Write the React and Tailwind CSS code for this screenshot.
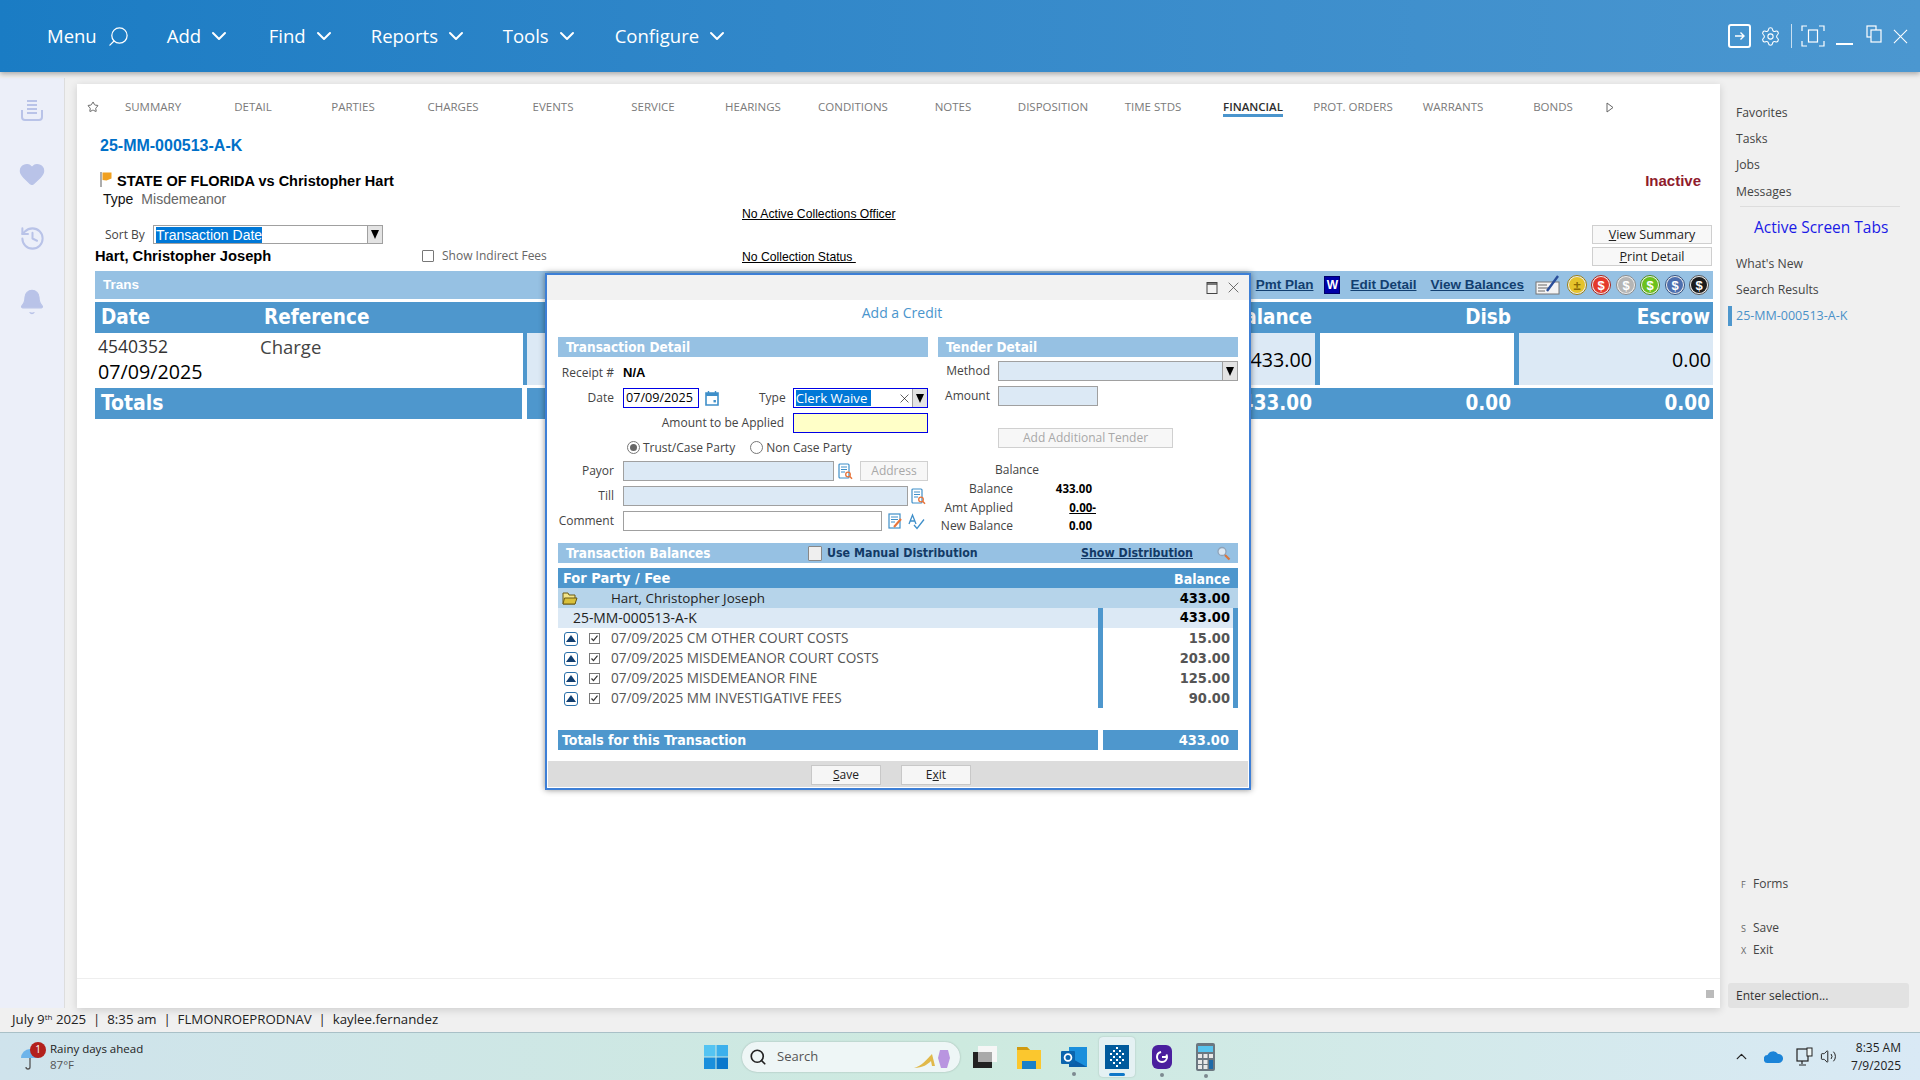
import React from 'react';
import { Search, ChevronDown, Settings, Star, Heart, History, Bell, ChevronUp, Volume2 } from 'lucide-react';

const arial = "font-['Liberation_Sans',Arial,sans-serif]";
const tahoma = "font-['DejaVu_Sans_Condensed','DejaVu_Sans',sans-serif]";

const navItems = [
  { label: 'Add', width: 'w-[102px]' },
  { label: 'Find', width: 'w-[102px]' },
  { label: 'Reports', width: 'w-[132px]' },
  { label: 'Tools', width: 'w-[112px]' },
  { label: 'Configure', width: 'w-[120px]' },
];

const tabs = ['SUMMARY', 'DETAIL', 'PARTIES', 'CHARGES', 'EVENTS', 'SERVICE', 'HEARINGS', 'CONDITIONS', 'NOTES', 'DISPOSITION', 'TIME STDS', 'FINANCIAL', 'PROT. ORDERS', 'WARRANTS', 'BONDS'];

const fees = [
  { name: '07/09/2025 CM OTHER COURT COSTS', amount: '15.00' },
  { name: '07/09/2025 MISDEMEANOR COURT COSTS', amount: '203.00' },
  { name: '07/09/2025 MISDEMEANOR FINE', amount: '125.00' },
  { name: '07/09/2025 MM INVESTIGATIVE FEES', amount: '90.00' },
];

const coins = [
  { fill: '#e5c32c', ring: '#9a7d10', text: '#8a6a05', sign: '±' },
  { fill: '#e5392b', ring: '#a8241a', text: '#fff', sign: '$' },
  { fill: '#b5b5b5', ring: '#8b8b8b', text: '#fff', sign: '$' },
  { fill: '#6cc11c', ring: '#4b8d10', text: '#fff', sign: '$' },
  { fill: '#4d6fae', ring: '#33507f', text: '#fff', sign: '$' },
  { fill: '#1d1d1d', ring: '#555555', text: '#fff', sign: '$' },
];

// white squares of the case-management app icon
const appDots = [[11, 2], [14, 5], [8, 5], [11, 8], [5, 8], [17, 8], [14, 11], [8, 11], [11, 14], [17, 14], [5, 14], [14, 17], [8, 17], [11, 20]];

const Coin = ({ fill, ring, text, sign }) => (
  <svg width="20" height="20" viewBox="0 0 20 20" className="shrink-0">
    <circle cx="10" cy="10" r="9.5" fill="#eeeeee" stroke={ring} strokeWidth="1" />
    <circle cx="10" cy="10" r="8" fill={fill} />
    <text x="10" y="14.5" textAnchor="middle" fontSize="13" fontWeight="700" fontFamily="Liberation Sans" fill={text}>{sign}</text>
  </svg>
);

const CloseIcon = ({ size, stroke = '#fff' }) => (
  <svg width={size} height={size} viewBox="0 0 16 16" className="shrink-0">
    <path d="M1 1l14 14M15 1L1 15" fill="none" stroke={stroke} strokeWidth="1.1" />
  </svg>
);

const LookupIcon = () => (
  <svg width="15" height="17" viewBox="0 0 15 17" className="shrink-0">
    <rect x="1" y="1" width="10" height="14" rx="1" fill="#fff" stroke="#3f8fc9" strokeWidth="1.2" />
    <path d="M3 4h6M3 6.5h6M3 9h4" stroke="#3f8fc9" strokeWidth="1" />
    <circle cx="10" cy="11.5" r="2.3" fill="none" stroke="#e8743a" strokeWidth="1.3" />
    <path d="M11.6 13.2l2.4 2.6" stroke="#e8743a" strokeWidth="1.5" />
  </svg>
);

const Arrow = () => (
  <span className="flex w-[15px] h-full items-center justify-center bg-[#e3e3e3] border-l border-[#a0a0a0]">
    <span className="w-0 h-0 border-x-[4px] border-x-transparent border-t-[9px] border-t-black" />
  </span>
);

const SectionHead = ({ children, className = '' }) => (
  <div className={`h-5 flex items-center pl-[8px] bg-[#96c1e3] text-white text-[13.5px] font-bold ${tahoma} ${className}`}>{children}</div>
);

const FormRow = ({ label, children, labelWidth = 'w-[56px]' }) => (
  <div className="flex items-center h-5">
    <span className={`${labelWidth} text-right text-[12px] text-[#444] shrink-0`}>{label}</span>
    <div className="ml-[9px] flex items-center h-5">{children}</div>
  </div>
);

const SmallBtn = ({ children, className = '' }) => (
  <button className={`h-5 bg-[#f6f6f6] border border-[#c8c8c8] text-[12px] text-[#222] ${className}`}>{children}</button>
);

const RailIcon = ({ children }) => <div className="h-[64px] flex items-center justify-center text-[#b9c3e8]">{children}</div>;

const RunningDot = ({ children, className = '' }) => (
  <div className={`relative shrink-0 flex items-center ${className}`}>
    {children}
    <span className="absolute left-1/2 -bottom-[7px] -ml-[2px] w-1 h-1 rounded-full bg-[#7d8a90]" />
  </div>
);

const Modal = () => (
  <div className="absolute left-[545px] top-[273px] w-[706px] h-[517px] border-2 border-[#3d7fd6] bg-white shadow-[0_0_6px_rgba(0,0,0,0.45)] flex flex-col">
    <div className="h-[25px] shrink-0 bg-[#f2f2f2] flex items-center justify-end pr-[10px] gap-[10px] text-[#444]">
      <svg width="12" height="13" viewBox="0 0 12 13"><rect x="1" y="1.5" width="10" height="11" fill="none" stroke="#444" strokeWidth="1" /><path d="M1 3h10" stroke="#444" strokeWidth="1.4" /></svg>
      <CloseIcon size={11} stroke="#444" />
    </div>
    <div className="h-6 shrink-0 flex items-center justify-center text-[14px] text-[#4a95cd] pl-[8px]">Add a Credit</div>

    <div className="mt-[13px] px-[11px] flex gap-[10px]">
      <div className="w-[370px]">
        <SectionHead>Transaction Detail</SectionHead>
        <div className="mt-[6px] flex flex-col gap-[5px]">
          <FormRow label="Receipt #"><span className={`text-[13px] font-bold text-black ${arial}`}>N/A</span></FormRow>
          <div className="flex items-center h-5">
            <FormRow label="Date">
              <div className="w-[76px] h-5 border border-[#0000e6] px-[2px] flex items-center text-[12.6px] text-black">07/09/2025</div>
            </FormRow>
            <svg width="14" height="16" viewBox="0 0 14 16" className="ml-[6px]"><path d="M1 3h12v12H1z" fill="#fff" stroke="#3f8fc9" strokeWidth="1.6" /><path d="M1 3h12v3H1z" fill="#3f8fc9" /><path d="M3.5 1v3M10.5 1v3" stroke="#3f8fc9" strokeWidth="1.4" /><rect x="8.5" y="10" width="2.4" height="2.4" fill="#3f8fc9" /></svg>
            <span className="ml-[40px] text-[12px] text-[#444]">Type</span>
            <div className="ml-[7px] w-[135px] h-5 border border-[#0000e6] flex items-center justify-between text-[13.2px]">
              <span className="ml-[2px] bg-[#0078d7] text-white h-[16px] leading-[16px] w-[75px] whitespace-nowrap overflow-hidden">Clerk Waive</span>
              <div className="flex items-center h-full">
                <CloseIcon size={9} stroke="#000" />
                <span className="w-[3px]" />
                <Arrow />
              </div>
            </div>
          </div>
          <div className="flex items-center h-5 justify-end">
            <span className="text-[12px] text-[#444] mr-[9px]">Amount to be Applied</span>
            <div className="w-[135px] h-5 border border-[#0000e6] bg-[#ffffc8]" />
          </div>
          <div className="flex items-center h-[18px] pt-[1px] pl-[69px] text-[12px] text-[#444]">
            <span className="w-[13px] h-[13px] rounded-full border border-[#777] flex items-center justify-center"><span className="w-[7px] h-[7px] rounded-full bg-[#666]" /></span>
            <span className="ml-[3px]">Trust/Case Party</span>
            <span className="ml-[15px] w-[13px] h-[13px] rounded-full border border-[#777]" />
            <span className="ml-[3px]">Non Case Party</span>
          </div>
          <div className="flex items-center h-5">
            <FormRow label="Payor"><div className="w-[211px] h-5 bg-[#dce9f5] border border-[#a0a0a0]" /></FormRow>
            <span className="ml-[4px]"><LookupIcon /></span>
            <button className="ml-[7px] w-[69px] h-5 bg-[#f7f7f7] border border-[#d0d0d0] text-[12px] text-[#a8a8a8]">Address</button>
          </div>
          <div className="flex items-center h-5">
            <FormRow label="Till"><div className="w-[285px] h-5 bg-[#dce9f5] border border-[#a0a0a0]" /></FormRow>
            <span className="ml-[3px]"><LookupIcon /></span>
          </div>
          <div className="flex items-center h-5">
            <FormRow label="Comment"><div className="w-[259px] h-5 bg-white border border-[#a0a0a0]" /></FormRow>
            <svg width="15" height="16" viewBox="0 0 15 16" className="ml-[6px]"><rect x="1" y="1" width="11" height="14" fill="#fff" stroke="#3f8fc9" strokeWidth="1.2" /><path d="M3 4h7M3 6.5h7M3 9h4" stroke="#3f8fc9" strokeWidth="1" /><path d="M6 14l7-8" stroke="#e8743a" strokeWidth="2" /></svg>
            <svg width="17" height="17" viewBox="0 0 17 17" className="ml-[5px]"><path d="M1 11L4.5 2 8 11M2.5 8h4" fill="none" stroke="#3f8fc9" strokeWidth="1.3" /><path d="M6 12l3 3.5 7-9" fill="none" stroke="#3f8fc9" strokeWidth="1.3" /></svg>
          </div>
        </div>
      </div>

      <div className="w-[300px]">
        <SectionHead className="pl-[7px]">Tender Detail</SectionHead>
        <div className="mt-1 flex flex-col gap-[5px]">
          <div className="flex items-center h-5">
            <span className="w-[52px] text-right text-[12px] text-[#444]">Method</span>
            <div className="ml-[8px] w-[240px] h-5 bg-[#dce9f5] border border-[#a0a0a0] flex justify-end"><Arrow /></div>
          </div>
          <div className="flex items-center h-5">
            <span className="w-[52px] text-right text-[12px] text-[#444]">Amount</span>
            <div className="ml-[8px] w-[100px] h-5 bg-[#dce9f5] border border-[#a0a0a0]" />
          </div>
        </div>
        <button className="mt-[22px] ml-[60px] block w-[175px] h-5 bg-[#f7f7f7] border border-[#d0d0d0] text-[12px] text-[#a8a8a8]">Add Additional Tender</button>
        <div className="mt-[14px] ml-[57px] text-[12px] text-[#444] h-4 leading-4">Balance</div>
        <div className="mt-[2px] text-[12px] text-[#444]">
          <div className="flex h-[18px] items-center"><span className="w-[75px] text-right">Balance</span><span className="w-[79px] text-right font-bold text-black text-[11.5px]">433.00</span></div>
          <div className="flex h-[19px] items-center"><span className="w-[75px] text-right">Amt Applied</span><span className="w-[83px] text-right font-bold text-black text-[11.5px] underline">0.00-</span></div>
          <div className="flex h-[18px] items-center"><span className="w-[75px] text-right">New Balance</span><span className="w-[79px] text-right font-bold text-black text-[11.5px]">0.00</span></div>
        </div>
      </div>
    </div>

    <div className={`mx-[11px] mt-[8px] h-5 shrink-0 flex items-center pl-[8px] bg-[#96c1e3] text-[12.3px] font-bold ${tahoma}`}>
      <span className="w-[242px] text-white text-[13.5px]">Transaction Balances</span>
      <span className="w-[14px] h-[15px] bg-[#efefef] border border-[#888] rounded-[1px]" />
      <span className="ml-[5px] w-[254px] text-[#123a66]">Use Manual Distribution</span>
      <span className="w-[135px] text-[#123a66] underline">Show Distribution</span>
      <svg width="15" height="15" viewBox="0 0 15 15"><circle cx="6" cy="5.5" r="4" fill="#dbe8f4" stroke="#8fa3b8" strokeWidth="1.3" /><path d="M9 9l4.5 4.5" stroke="#d9763f" strokeWidth="2.2" /></svg>
    </div>

    <div className={`mx-[11px] mt-[5px] h-5 shrink-0 flex items-center justify-between pl-[5px] pr-[8px] pt-[2px] bg-[#4e97cd] text-white text-[14.5px] font-bold ${tahoma}`}>
      <span>For Party / Fee</span>
      <span className="text-[14px]">Balance</span>
    </div>
    <div className="mx-[11px] h-5 shrink-0 flex items-center pt-[1px] bg-[#b6d4ea] text-[13.4px] text-[#222]">
      <svg width="16" height="13" viewBox="0 0 16 13" className="ml-[4px]"><path d="M1 12V1h5l1 2h6v9z" fill="#f2e58a" stroke="#6b5b14" strokeWidth="1" /><path d="M1 12l1.5-6H15l-2 6z" fill="#d9c03a" stroke="#6b5b14" strokeWidth="1" /></svg>
      <span className="ml-[33px]">Hart, Christopher Joseph</span>
      <span className={`ml-auto mr-[8px] text-[14.5px] font-bold text-black ${tahoma}`}>433.00</span>
    </div>
    <div className="mx-[11px] h-5 shrink-0 flex pt-[1px] bg-[#dce9f5] text-[13.9px] text-[#222]">
      <div className="w-[540px] pl-[15px] flex items-center">25-MM-000513-A-K</div>
      <div className={`w-[140px] -mt-[1px] border-x-[5px] border-[#4e97cd] flex items-center justify-end pr-[3px] text-[14.5px] font-bold text-black ${tahoma}`}>433.00</div>
    </div>
    {fees.map((fee) => (
      <div key={fee.name} className="mx-[11px] h-5 shrink-0 flex text-[13.6px] text-[#555]">
        <div className="w-[540px] flex items-center pl-[6px] pt-[1px]">
          <span className="w-[14px] h-[14px] rounded-[3px] border border-[#2a6fa8] bg-white flex items-center justify-center">
            <span className="w-0 h-0 border-x-[5px] border-x-transparent border-b-[7px] border-b-[#123f70]" />
          </span>
          <span className="ml-[11px] w-[11px] h-[11px] border border-[#777] flex items-center justify-center">
            <svg width="9" height="9" viewBox="0 0 9 9"><path d="M1.5 4.5l2 2.2 4-5" fill="none" stroke="#333" strokeWidth="1.2" /></svg>
          </span>
          <span className="ml-[11px]">{fee.name}</span>
        </div>
        <div className={`w-[140px] border-x-[5px] border-[#4e97cd] flex items-center justify-end pr-[3px] pt-[2px] text-[14.5px] font-bold text-[#555] ${tahoma}`}>{fee.amount}</div>
      </div>
    ))}
    <div className={`mx-[11px] mt-[22px] h-5 shrink-0 flex gap-[5px] text-white text-[14px] font-bold ${tahoma}`}>
      <div className="w-[540px] bg-[#4e97cd] flex items-center pl-[4px] pt-[1px]">Totals for this Transaction</div>
      <div className="w-[135px] bg-[#4e97cd] flex items-center justify-end pr-[9px] pt-[1px] text-[14.5px]">433.00</div>
    </div>
    <div className="mt-auto h-[26px] shrink-0 bg-[#dcdcdc] flex items-center justify-center gap-[20px] pr-[14px] pt-[1px] mx-[1px] mb-[1px]">
      <SmallBtn className="w-[70px]"><span className="underline">S</span>ave</SmallBtn>
      <SmallBtn className="w-[70px]">E<span className="underline">x</span>it</SmallBtn>
    </div>
  </div>
);

const MainPanel = () => (
  <div className="relative ml-3 mt-3 w-[1643px] bg-white shadow-[0_2px_8px_rgba(0,0,0,0.15)] flex flex-col">
    <div className="h-[46px] shrink-0 flex items-center text-[11.5px] text-[#7a7a7a]">
      <div className="w-[26px] pl-[10px]"><Star size={12} className="text-[#666]" /></div>
      {tabs.map((tab) => (
        <div key={tab} className="w-[100px] h-full flex items-center justify-center">
          {tab === 'FINANCIAL' ? (
            <span className="relative font-semibold text-[#2e2e2e]">
              {tab}
              <span className="absolute left-0 right-0 -bottom-[1px] h-[3px] bg-[#4a95cd]" />
            </span>
          ) : tab}
        </div>
      ))}
      <svg width="8" height="11" viewBox="0 0 8 11" className="ml-[3px]"><path d="M1 1l6 4.5L1 10z" fill="none" stroke="#666" strokeWidth="1" /></svg>
    </div>
    <div className={`h-8 shrink-0 flex items-center pl-[23px] pb-[1px] text-[16px] font-bold text-[#0070c8] ${arial}`}>25-MM-000513-A-K</div>
    <div className={`mt-[11px] h-[18px] shrink-0 flex items-center pl-[23px] pr-[19px] ${arial}`}>
      <svg width="12" height="15" viewBox="0 0 12 15" className="-mt-[5px]"><path d="M1 0v15" stroke="#999" strokeWidth="1.6" /><path d="M2.5 0.5h9v6l-5 2-4-.5z" fill="#f0a020" /></svg>
      <span className="ml-[5px] text-[14.5px] font-bold text-black">STATE OF FLORIDA vs Christopher Hart</span>
      <span className="ml-auto mb-[2px] text-[15px] font-bold text-[#8f1c2c]">Inactive</span>
    </div>
    <div className={`h-4 shrink-0 flex items-center pl-[26px] text-[14px] ${arial}`}>
      <span className="text-[#111]">Type</span>
      <span className="ml-[8px] text-[#666]">Misdemeanor</span>
    </div>
    <div className="h-[64px] shrink-0 flex">
      <div className="w-[345px] shrink-0 pl-[18px]">
        <div className="mt-[18px] h-[19px] flex items-center">
          <span className="ml-[10px] w-[48px] text-[12px] text-[#444]">Sort By</span>
          <div className="w-[230px] h-[19px] border border-[#a0a0a0] flex items-center justify-between text-[14px]">
            <span className={`ml-[2px] bg-[#0078d7] text-white leading-[16px] h-[16px] ${arial}`}>Transaction Date</span>
            <Arrow />
          </div>
        </div>
        <div className={`mt-[3px] h-[19px] flex items-center text-[14.7px] font-bold text-black ${arial}`}>Hart, Christopher Joseph</div>
      </div>
      <div className="w-[320px] shrink-0 pt-[43px] flex items-start">
        <span className="w-3 h-3 border border-[#777] rounded-[1px]" />
        <span className="ml-2 text-[12px] leading-3 text-[#666]">Show Indirect Fees</span>
      </div>
      <div className={`flex-1 pt-[1px] text-[12.2px] text-black underline ${arial}`}>
        <div className="h-[12px] leading-[12px]">No Active Collections Officer</div>
        <div className="mt-[31px] h-[12px] leading-[12px]">No Collection Status&nbsp;</div>
      </div>
      <div className="w-[120px] mr-[8px] pt-[18px] flex flex-col gap-[3px] text-[12.5px]">
        <button className="h-[19px] bg-[#f8f8f8] border border-[#cfcfcf] text-[#222]"><span className="underline">V</span>iew Summary</button>
        <button className="h-[19px] bg-[#f8f8f8] border border-[#cfcfcf] text-[#222]"><span className="underline">P</span>rint Detail</button>
      </div>
    </div>

    <div className={`ml-[18px] w-[1618px] h-7 shrink-0 bg-[#96c1e3] flex items-center pl-[8px] pr-[4px] text-[13.5px] font-bold text-[#123f70] ${arial}`}>
      <span className="text-white">Trans</span>
      <span className="ml-auto underline">Pmt Plan</span>
      <span className="ml-[11px] w-4 h-[18px] bg-[#0000a8] border border-[#00006a] flex items-center justify-center text-[12px] leading-none text-white">W</span>
      <span className="ml-[10px] underline">Edit Detail</span>
      <span className="ml-[14px] underline">View Balances</span>
      <svg width="25" height="20" viewBox="0 0 25 20" className="ml-[11px] mr-[7px]"><rect x="1" y="7" width="23" height="12" fill="#f4f4f4" stroke="#777" strokeWidth="1" /><path d="M3 10h9M3 13h12M3 16h7" stroke="#666" strokeWidth="1" /><path d="M12 16L23 1" stroke="#2a4e9a" strokeWidth="2.4" /></svg>
      <div className="flex gap-[4.4px]">
        {coins.map((coin, i) => <Coin key={i} {...coin} />)}
      </div>
    </div>

    <div className={`mt-[3px] ml-[18px] w-[1618px] h-[31px] shrink-0 bg-[#4e97cd] flex items-center pr-[3px] text-white text-[20.5px] font-bold ${tahoma}`}>
      <span className="ml-[6px] w-[163px]">Date</span>
      <span>Reference</span>
      <span className="ml-auto">Balance</span>
      <span className="w-[199px] text-right">Disb</span>
      <span className="w-[199px] text-right">Escrow</span>
    </div>
    <div className="ml-[18px] w-[1618px] h-[52px] shrink-0 flex text-[19.7px] text-black">
      <div className="w-[428px] flex pl-[3px] pt-[1px]">
        <div className="w-[162px] leading-[25px]">
          <div className="text-[17.5px] text-[#333]">4540352</div>
          <div>07/09/2025</div>
        </div>
        <div className="leading-[25px] text-[18.5px] text-[#444]">Charge</div>
      </div>
      <div className="flex-1 border-l-[4px] border-[#4e97cd] bg-[#dce9f5] flex items-center justify-end pr-[3px] pt-[1px]">433.00</div>
      <div className="w-[204px] border-x-[5px] border-[#4e97cd]" />
      <div className="w-[194px] bg-[#dce9f5] flex items-center justify-end pr-[2px] pt-[1px]">0.00</div>
    </div>
    <div className={`mt-[3px] ml-[18px] w-[1618px] h-[31px] shrink-0 flex gap-[5px] text-white text-[20.5px] font-bold ${tahoma}`}>
      <div className="w-[427px] bg-[#4e97cd] flex items-center pl-[6px] text-[21px]">Totals</div>
      <div className="flex-1 bg-[#4e97cd] flex items-center pr-[3px]">
        <span className="ml-auto">433.00</span>
        <span className="w-[199px] text-right">0.00</span>
        <span className="w-[199px] text-right">0.00</span>
      </div>
    </div>

    <div className="mt-auto h-[30px] shrink-0 border-t border-[#eeeeee] flex justify-end items-center pr-[6px]">
      <span className="w-2 h-2 mt-[1px] bg-[#bbbbbb]" />
    </div>
  </div>
);

const RightPanel = () => (
  <div className="w-[200px] shrink-0 flex flex-col text-[12.2px] text-[#444] pt-[27px]">
    {['Favorites', 'Tasks', 'Jobs', 'Messages'].map((item) => (
      <div key={item} className="h-[26.5px] flex items-center pl-4 first:mt-[1px]">{item}</div>
    ))}
    <div className="mt-[1px] mx-5 border-t border-[#dddddd]" />
    <div className="h-[45px] flex items-center pl-[34px] pb-[3px] text-[15.5px] text-[#1a1ae6]">Active Screen Tabs</div>
    <div className="h-[26px] flex items-center pl-4">What's New</div>
    <div className="h-[26px] flex items-center pl-4">Search Results</div>
    <div className="h-[27px] flex items-center pl-2 text-[12.5px] text-[#4a90c8]">
      <span className="w-1 h-[20px] bg-[#4e97cd] mr-1" />25-MM-000513-A-K
    </div>
    <div className="mt-[546px] text-[12px]">
      <div className="h-[18px] flex items-center pl-[21px]"><span className="w-3 text-[9px] text-[#666]">F</span>Forms</div>
      <div className="mt-[26px] h-[18px] flex items-center pl-[21px]"><span className="w-3 text-[9px] text-[#666]">S</span>Save</div>
      <div className="mt-1 h-[18px] flex items-center pl-[21px]"><span className="w-3 text-[9px] text-[#666]">X</span>Exit</div>
    </div>
    <div className="mt-[24px] ml-2 w-[181px] h-[25px] rounded-[3px] bg-[#e2e2e2] flex items-center pl-2 text-[12px] text-[#333]">Enter selection...</div>
  </div>
);

const Taskbar = () => (
  <div className="h-[48px] shrink-0 border-t border-[#a9c0c7] bg-gradient-to-r from-[#cfe3ec] via-[#cdeadf] to-[#d9e9f5] flex items-center text-[11.5px] text-[#222]">
    <div className="relative w-[50px] pl-[20px]">
      <svg width="20" height="24" viewBox="0 0 20 24" className="mt-1"><path d="M1 11a9 9 0 0118 0z" fill="#6db4ea" /><path d="M10 11v9a2 2 0 01-4 0" fill="none" stroke="#555" strokeWidth="1.3" /></svg>
      <span className="absolute left-[30px] -top-[1px] w-4 h-4 rounded-full bg-[#b3201c] text-white text-[10px] flex items-center justify-center">1</span>
    </div>
    <div className="w-[654px] leading-[16px]">
      <div>Rainy days ahead</div>
      <div className="text-[#555]">87°F</div>
    </div>
    <svg width="24" height="24" viewBox="0 0 24 24" className="shrink-0">
      <rect x="0" y="0" width="11.5" height="11.5" fill="#54c4f2" />
      <rect x="12.5" y="0" width="11.5" height="11.5" fill="#3cb0ec" />
      <rect x="0" y="12.5" width="11.5" height="11.5" fill="#1a8fdc" />
      <rect x="12.5" y="12.5" width="11.5" height="11.5" fill="#0a78cc" />
    </svg>
    <div className="ml-[14px] w-[218px] h-[30px] rounded-full bg-[#eef6f6] flex items-center pl-[7px] shadow-[0_0_2px_rgba(0,0,0,0.25)] text-[13px] text-[#555]">
      <Search size={18} strokeWidth={2.2} className="text-[#222]" />
      <span className="ml-[10px]">Search</span>
      <svg width="44" height="26" viewBox="0 0 44 26" className="ml-auto mr-1"><path d="M2 24c8-2 12-8 18-14l3 12h-3l-1-5c-3 3-8 7-17 7z" fill="#e1b94a" /><path d="M28 6h8l2 8-3 10h-6l-3-10z" fill="#b995e0" /></svg>
    </div>
    <svg width="26" height="24" viewBox="0 0 26 24" className="ml-[12px] shrink-0"><rect x="6" y="1" width="19" height="16" fill="#f6f6f6" /><rect x="1" y="7" width="19" height="16" fill="#222" /><rect x="6" y="7" width="14" height="10" fill="#aaa" /></svg>
    <svg width="24" height="24" viewBox="0 0 24 24" className="ml-[19px] shrink-0"><path d="M0 4a2 2 0 012-2h8l3 3h11v19H0z" fill="#fbc72e" /><path d="M0 2h10l3 3H0z" fill="#d19a10" /><rect x="5" y="16" width="14" height="8" fill="#1a80c8" /></svg>
    <RunningDot className="ml-[20px]">
      <svg width="26" height="24" viewBox="0 0 26 24"><rect x="8" y="2" width="18" height="20" fill="#1a8fdc" /><path d="M8 12l18 10H8z" fill="#0a5ea8" /><rect x="0" y="6" width="14" height="13" rx="1" fill="#0a64ad" /><circle cx="7" cy="12.5" r="3.4" fill="none" stroke="#fff" strokeWidth="1.8" /></svg>
    </RunningDot>
    <div className="ml-[12px] w-[36px] h-[40px] rounded-[4px] bg-[#e4f1f3] shadow-[0_0_2px_rgba(0,0,0,0.2)] flex flex-col items-center justify-end">
      <svg width="24" height="24" viewBox="0 0 24 24">
        <rect width="24" height="24" fill="#005a9c" />
        {appDots.map(([x, y]) => <rect key={`${x}-${y}`} x={x} y={y} width="2" height="2" fill="#fff" />)}
      </svg>
      <span className="mt-[4px] mb-[1px] w-4 h-[3px] rounded-full bg-[#0f78c8]" />
    </div>
    <RunningDot className="ml-[16px]">
      <svg width="22" height="26" viewBox="0 0 22 26"><rect x="1" y="1" width="20" height="24" rx="6" fill="#4a1f9e" /><circle cx="11" cy="13" r="5" fill="none" stroke="#fff" strokeWidth="2" strokeDasharray="22 6" /><path d="M11 13h5" stroke="#fff" strokeWidth="2" /></svg>
    </RunningDot>
    <RunningDot className="ml-[23px]">
      <svg width="19" height="28" viewBox="0 0 19 28"><rect width="19" height="28" rx="2" fill="#6b7780" /><rect x="2" y="3" width="15" height="6" fill="#58c4ee" /><rect x="2" y="11" width="4" height="4" fill="#e8e8e8" /><rect x="7.5" y="11" width="4" height="4" fill="#e8e8e8" /><rect x="13" y="11" width="4" height="4" fill="#e8e8e8" /><rect x="2" y="17" width="4" height="4" fill="#e8e8e8" /><rect x="7.5" y="17" width="4" height="4" fill="#e8e8e8" /><rect x="13" y="17" width="4" height="9" fill="#1f6aa8" /><rect x="2" y="22" width="4" height="4" fill="#e8e8e8" /><rect x="7.5" y="22" width="4" height="4" fill="#e8e8e8" /></svg>
    </RunningDot>
    <ChevronUp size={17} strokeWidth={1.8} className="ml-[518px] shrink-0 text-[#222]" />
    <svg width="19" height="13" viewBox="0 0 19 13" className="ml-[14px] shrink-0"><path d="M4 13a4 4 0 01-.5-8A6 6 0 0114 4a4.5 4.5 0 011 9z" fill="#1b84d8" /></svg>
    <svg width="18" height="20" viewBox="0 0 18 20" className="ml-[13px] shrink-0"><rect x="1" y="2" width="11" height="12" fill="none" stroke="#222" strokeWidth="1.2" /><path d="M6 14v3M3 18h7" stroke="#222" strokeWidth="1.2" /><rect x="11" y="1" width="5" height="8" fill="#eef6f6" stroke="#222" strokeWidth="1" /></svg>
    <Volume2 size={17} strokeWidth={1.4} className="ml-[6px] shrink-0 text-[#222]" />
    <div className="ml-auto mr-[19px] text-right text-[12px] leading-[18px] text-[#222]">
      <div>8:35 AM</div>
      <div>7/9/2025</div>
    </div>
  </div>
);

export default function App() {
  return (
    <div className="relative w-[1920px] h-[1080px] overflow-hidden bg-[#f0f0f0] flex flex-col font-['Open_Sans',sans-serif]">
      {/* top menu */}
      <div className="h-[72px] shrink-0 flex items-center bg-gradient-to-r from-[#1a7cc4] to-[#4b97d0] text-white text-[18.5px] shadow-[0_2px_5px_rgba(0,0,0,0.3)] z-10">
        <span className="ml-[47px]">Menu</span>
        <Search size={23} strokeWidth={1.3} className="ml-[10px] mr-[37px] -scale-x-100" />
        {navItems.map((item) => (
          <div key={item.label} className={`${item.width} flex items-center`}>
            <span>{item.label}</span>
            <ChevronDown size={24} strokeWidth={2} className="ml-[6px]" />
          </div>
        ))}
        <div className="ml-auto mr-[12px] flex items-center">
          <span className="w-[23px] h-[24px] rounded-[3px] border-2 border-white flex items-center justify-center">
            <svg width="12" height="12" viewBox="0 0 12 12"><path d="M1 6h9M6.5 2.5L10 6l-3.5 3.5" fill="none" stroke="#fff" strokeWidth="1.4" /></svg>
          </span>
          <Settings size={21} strokeWidth={1.2} className="ml-[9px]" />
          <span className="ml-[10px] w-px h-[24px] bg-white/70" />
          <svg width="24" height="22" viewBox="0 0 24 22" className="ml-[9px]"><path d="M1 6V1h5M18 1h5v5M23 16v5h-5M6 21H1v-5" fill="none" stroke="#fff" strokeWidth="1.2" /><rect x="7.5" y="5" width="9" height="12" fill="none" stroke="#fff" strokeWidth="1.2" /></svg>
          <span className="ml-[11px] mt-[16px] w-[17px] h-[2px] bg-white" />
          <svg width="16" height="18" viewBox="0 0 16 18" className="ml-[13px] -mt-[4px]"><rect x="1" y="1" width="9" height="11" fill="none" stroke="#fff" strokeWidth="1.2" /><rect x="5" y="5" width="10" height="12" fill="#4b97d0" stroke="#fff" strokeWidth="1.2" /></svg>
          <span className="ml-[11px]"><CloseIcon size={15} /></span>
        </div>
      </div>

      {/* body */}
      <div className="h-[936px] shrink-0 flex">
        <div className="mt-[6px] w-[65px] shrink-0 bg-[#eceff9] border-r border-[#dddddd] flex flex-col">
          <div className="h-[64px] flex items-center justify-center">
            <svg width="22" height="22" viewBox="0 0 22 22" fill="none" stroke="#b9c3e8" strokeWidth="2"><path d="M6 2h10M6 6h10M6 10h10M6 14h10" /><path d="M1 11v7a3 3 0 003 3h14a3 3 0 003-3v-7" /></svg>
          </div>
          <RailIcon><Heart size={28} fill="#b9c3e8" strokeWidth={1} /></RailIcon>
          <RailIcon><History size={27} strokeWidth={1.8} /></RailIcon>
          <RailIcon><Bell size={28} fill="#b9c3e8" strokeWidth={1} /></RailIcon>
        </div>
        <MainPanel />
        <RightPanel />
      </div>

      <div className="h-[24px] shrink-0 flex items-center pl-3 text-[13.25px] text-[#222]">
        July 9<sup className="text-[8px] -top-[3px]">th</sup>&nbsp;2025&nbsp; | &nbsp;8:35 am&nbsp; | &nbsp;FLMONROEPRODNAV&nbsp; | &nbsp;kaylee.fernandez
      </div>

      <Taskbar />
      <Modal />
    </div>
  );
}
